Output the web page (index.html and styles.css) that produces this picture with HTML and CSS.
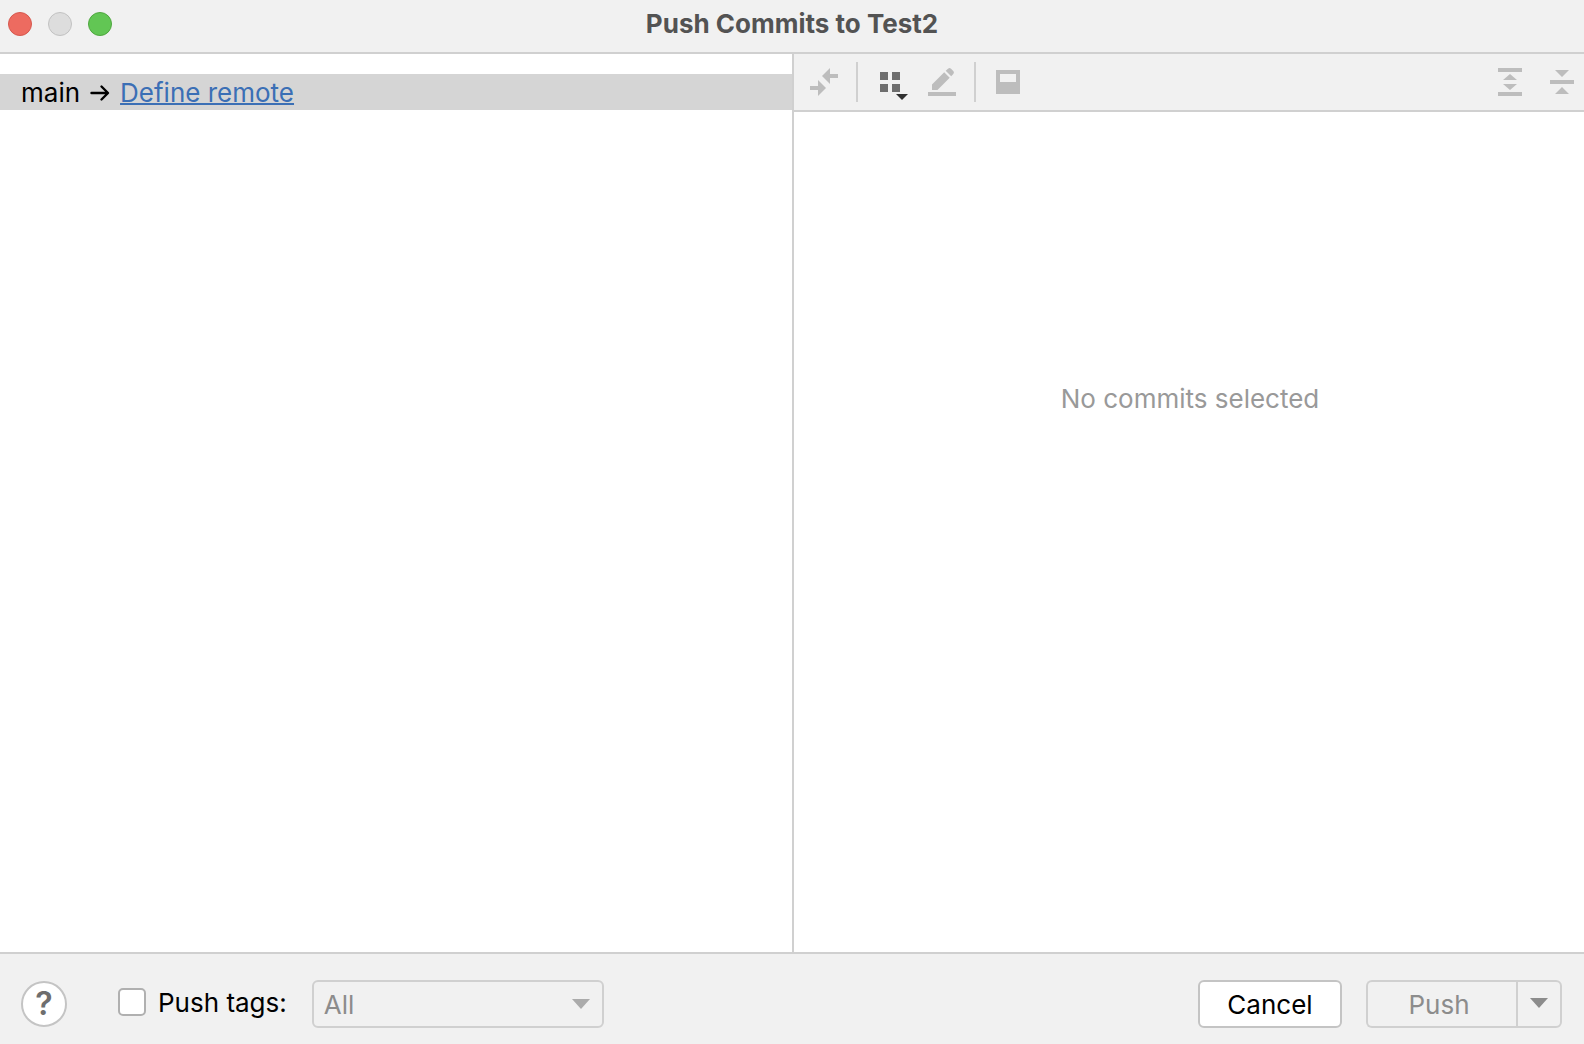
FILE: index.html
```html
<!DOCTYPE html>
<html lang="en">

<head>
    <meta charset="UTF-8" />
    <meta name="viewport" content="width=device-width, initial-scale=1" />
    <title>Push Commits to Test2</title>
    <link rel="stylesheet" href="styles.css">
</head>

<body>
    <header class="titlebar">
        <div class="window-controls">
            <button type="button" class="dot close" aria-label="Close"></button>
            <button type="button" class="dot minimize" aria-label="Minimize" disabled></button>
            <button type="button" class="dot maximize" aria-label="Maximize"></button>
        </div>
        <h1>Push Commits to Test2</h1>
    </header>

    <main class="content">
        <section class="repos" aria-label="Repositories">
            <div class="repo-row selected">
                <span>main</span>
                <svg class="arrow" width="20" height="18" viewBox="0 0 20 18" aria-hidden="true">
                    <path d="M1.500 9h16M11.500 2.500L18 9L11.500 15.500" />
                </svg>
                <a href="#">Define remote</a>
            </div>
        </section>

        <section class="commits" aria-label="Changes">
            <div class="toolbar">
                <button type="button" class="tool" aria-label="Show Diff" disabled>
                    <svg width="32" height="32" viewBox="0 0 32 32">
                        <path d="M14 10l8-8v6h8v4h-8v6zM2 20h8v-6l8 8l-8 8v-6H2z" />
                    </svg>
                </button>
                <span class="separator"></span>
                <div class="tool-group">
                    <button type="button" class="tool enabled" aria-label="Group By">
                        <svg width="32" height="32" viewBox="0 0 32 32">
                            <path d="M6 6h8v8H6zM18 6h8v8h-8zM6 18h8v8H6zM18 18h8v8h-8z" />
                            <path class="menu-mark" d="M22 28h12l-6 6z" />
                        </svg>
                    </button>
                    <button type="button" class="tool" aria-label="Edit Source" disabled>
                        <svg width="32" height="32" viewBox="0 0 32 32">
                            <path d="M6 18.500L18.200 6.300L23.700 11.800L11.500 24H6zM19.700 4.800L22.300 2.500Q23.700 1.500 25 2.700L27.300 5Q28.500 6.300 27.500 7.700L25.200 10.300zM2 26h28v4H2z" />
                        </svg>
                    </button>
                </div>
                <span class="separator"></span>
                <button type="button" class="tool" aria-label="Preview Diff" disabled>
                    <svg width="32" height="32" viewBox="0 0 32 32">
                        <path fill-rule="evenodd" d="M4 4h24v24H4zM8 8v8h16V8z" />
                    </svg>
                </button>
                <div class="tool-group right">
                    <button type="button" class="tool" aria-label="Expand All" disabled>
                        <svg width="32" height="32" viewBox="0 0 32 32">
                            <path d="M4 2h24v4H4zM16 8l7 6H9zM9 18h14l-7 6zM4 26h24v4H4z" />
                        </svg>
                    </button>
                    <button type="button" class="tool" aria-label="Collapse All" disabled>
                        <svg width="32" height="32" viewBox="0 0 32 32">
                            <path d="M9 4h14l-7 7zM4 14h24v4H4zM16 21l7 7H9z" />
                        </svg>
                    </button>
                </div>
            </div>
            <p class="empty-text">No commits selected</p>
        </section>
    </main>

    <footer class="footer">
        <button type="button" class="help" aria-label="Help">?</button>
        <label class="push-tags" for="pushTags">
            <input type="checkbox" id="pushTags" />
            <span>Push tags:</span>
        </label>
        <div class="combo">
            <select id="tagMode" aria-label="Push tags" disabled>
                <option>All</option>
                <option>Current Branch</option>
            </select>
            <svg class="combo-arrow" width="18" height="10" viewBox="0 0 18 10" aria-hidden="true">
                <path d="M0 0h18l-9 10z" />
            </svg>
        </div>
        <div class="actions">
            <button type="button" class="btn cancel">Cancel</button>
            <div class="split">
                <button type="button" class="btn push" disabled>Push</button>
                <button type="button" class="btn more" aria-label="More push options" disabled>
                    <svg width="18" height="10" viewBox="0 0 18 10">
                        <path d="M0 0h18l-9 10z" />
                    </svg>
                </button>
            </div>
        </div>
    </footer>
</body>

</html>
```
FILE: styles.css
```css
* {
    box-sizing: border-box;
}

body {
    margin: 0;
    display: flex;
    flex-direction: column;
    min-height: 100vh;
    font-family: Inter, "Helvetica Neue", "Liberation Sans", sans-serif;
    font-size: 26px;
    line-height: 32px;
    color: #000;
    background-color: #f1f1f1;
}

button,
select {
    font: inherit;
    color: inherit;
    padding: 0;
    border: none;
    background: none;
}

svg {
    display: block;
    overflow: visible;
}

/* title bar */
.titlebar {
    display: grid;
    grid-template-columns: 1fr auto 1fr;
    align-items: center;
    padding: 7px 8px 11px;
    border-bottom: 2px solid #d0d0d0;
}

.window-controls {
    display: flex;
    gap: 16px;
}

.dot {
    width: 24px;
    height: 24px;
    border-radius: 50%;
    border: 1px solid #d6584e;
}

.close {
    background-color: #ed6b60;
}

.minimize {
    background-color: #dddddd;
    border-color: #c2c2c2;
}

.maximize {
    background-color: #62c654;
    border-color: #4fa73f;
}

h1 {
    margin: 0;
    font-size: 26px;
    font-weight: 700;
    line-height: 34px;
    color: #535353;
}

/* main panes */
.content {
    flex: 1;
    display: flex;
    background-color: #fff;
}

.repos {
    width: calc(50% + 2px);
    padding-top: 20px;
    border-right: 2px solid #d0d0d0;
}

.repo-row {
    display: flex;
    align-items: center;
    gap: 10px;
    height: 36px;
    padding: 2px 0 0 21px;
}

.repo-row.selected {
    background-color: #d5d5d5;
}

.arrow {
    fill: none;
    stroke: #000;
    stroke-width: 2.4;
    stroke-linecap: round;
    stroke-linejoin: round;
}

.repo-row a {
    color: #3b6fb5;
    text-decoration: underline;
    text-decoration-thickness: 2px;
    text-underline-offset: 1px;
    text-decoration-skip-ink: none;
}

.commits {
    flex: 1;
}

.toolbar {
    display: flex;
    align-items: center;
    gap: 16px;
    height: 58px;
    padding: 0 6px 0 14px;
    background-color: #f1f1f1;
    border-bottom: 2px solid #d0d0d0;
}

.tool {
    fill: #bdbdbd;
}

.tool.enabled {
    fill: #6e6e6e;
}

.menu-mark {
    fill: #303030;
}

.tool-group {
    display: flex;
    gap: 20px;
}

.tool-group.right {
    margin-left: auto;
}

.separator {
    width: 2px;
    height: 40px;
    background-color: #d0d0d0;
}

.empty-text {
    margin: 0;
    padding: 271px 0 0 2px;
    text-align: center;
    color: #999999;
}

/* bottom bar */
.footer {
    display: flex;
    align-items: center;
    padding: 26px 22px 16px 21px;
    border-top: 2px solid #d0d0d0;
}

.help {
    width: 46px;
    height: 46px;
    border: 2px solid #c4c4c4;
    border-radius: 50%;
    background-color: #fff;
    font-size: 32px;
    font-weight: 600;
    color: #6e6e6e;
}

.push-tags {
    display: flex;
    align-items: center;
    gap: 12px;
    margin: 0 25px 0 51px;
    padding-bottom: 4px;
}

.push-tags input {
    appearance: none;
    width: 28px;
    height: 28px;
    margin: 0;
    border: 2px solid #b0b0b0;
    border-radius: 5px;
    background-color: #fff;
}

.push-tags input:checked {
    background-color: #3b6fb5;
}

.push-tags span {
    padding-top: 2px;
}

.combo {
    display: grid;
    align-items: center;
    width: 292px;
}

.combo select,
.combo-arrow {
    grid-area: 1 / 1;
}

.combo select {
    appearance: none;
    height: 48px;
    padding: 2px 40px 0 10px;
    border: 2px solid #d0d0d0;
    border-radius: 6px;
    color: #8c8c8c;
    opacity: 1;
}

.combo-arrow {
    justify-self: end;
    margin-right: 14px;
    fill: #ababab;
    pointer-events: none;
}

.actions {
    display: flex;
    gap: 24px;
    margin-left: auto;
}

.btn {
    height: 48px;
    padding-top: 2px;
    border: 2px solid #c4c4c4;
    border-radius: 6px;
}

.cancel {
    width: 144px;
    background-color: #fff;
}

.split {
    display: flex;
}

.push,
.more {
    border-color: #d0d0d0;
    color: #8c8c8c;
}

.push {
    width: 150px;
    padding-right: 6px;
    border-right: none;
    border-radius: 6px 0 0 6px;
}

.more {
    display: flex;
    align-items: center;
    justify-content: center;
    width: 46px;
    padding: 0 0 2px;
    border-radius: 0 6px 6px 0;
    fill: #8c8c8c;
}
```
